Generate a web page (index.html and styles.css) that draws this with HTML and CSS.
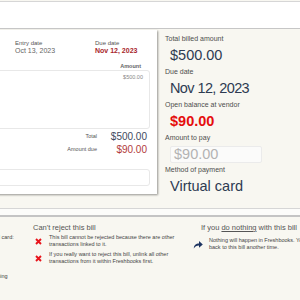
FILE: index.html
```html
<!DOCTYPE html>
<html>
<head>
  <title>Bill review</title>
  <link rel="stylesheet" href="styles.css">
</head>
<body>
  <div class="topbar"></div>

  <div class="main">
    <div class="bill-card">
      <div class="dates">
        <div>
          <div class="small-label">Entry date</div>
          <div class="date">Oct 13, 2023</div>
        </div>
        <div>
          <div class="small-label">Due date</div>
          <div class="date due">Nov 12, 2023</div>
        </div>
      </div>
      <div class="amount-head">Amount</div>
      <div class="lines-box">
        <div class="line-amt">$500.00</div>
      </div>
      <div class="totals">
        <span class="t-label">Total</span><span class="t-value">$500.00</span>
        <span class="t-label">Amount due</span><span class="t-value due">$90.00</span>
      </div>
      <div class="notes-box"></div>
    </div>

    <div class="summary">
      <div class="field">
        <div class="field-label">Total billed amount</div>
        <div class="field-value">$500.00</div>
      </div>
      <div class="field">
        <div class="field-label">Due date</div>
        <div class="field-value tight">Nov 12, 2023</div>
      </div>
      <div class="field">
        <div class="field-label">Open balance at vendor</div>
        <div class="field-value open">$90.00</div>
      </div>
      <div class="field">
        <div class="field-label">Amount to pay</div>
        <div class="pay-input">$90.00</div>
      </div>
      <div class="field">
        <div class="field-label">Method of payment</div>
        <div class="field-value">Virtual card</div>
      </div>
    </div>
  </div>

  <div class="divider"></div>

  <div class="outcomes">
    <div class="outcome first">
      <p class="note">Pay by virtual card:</p>
      <p class="note later">If you do nothing</p>
    </div>

    <div class="outcome reject">
      <h3>Can't reject this bill</h3>
      <div class="item">
        <svg class="x-icon" viewBox="0 0 7 7"><path d="M1 1 L6 6 M6 1 L1 6"/></svg>
        <p class="note">This bill cannot be rejected because there are other<br>transactions linked to it.</p>
      </div>
      <div class="item">
        <svg class="x-icon" viewBox="0 0 7 7"><path d="M1 1 L6 6 M6 1 L1 6"/></svg>
        <p class="note">If you really want to reject this bill, unlink all other<br>transactions from it within Freshbooks first.</p>
      </div>
    </div>

    <div class="outcome nothing">
      <h3>If you <u>do nothing</u> with this bill</h3>
      <div class="item">
        <svg class="arrow-icon" viewBox="0 0 10 9"><path d="M0.8 8.6 C0.8 5 3 3.4 6 3.4 L6 1 L9.8 4.4 L6 7.8 L6 5.4 C3.6 5.4 1.9 6.4 0.8 8.6 Z"/></svg>
        <p class="note">Nothing will happen in Freshbooks. You can come<br>back to this bill another time.</p>
      </div>
    </div>
  </div>
</body>
</html>
```

FILE: styles.css
```css
body {
  margin: 0;
  font-family: "Liberation Sans", Arial, sans-serif;
  background: #f8f7f1;
  overflow: hidden;
}

.topbar {
  margin-top: 1px;
  height: 26px;
  background: #fff;
  border-top: 1px solid #d6d6d6;
  border-bottom: 1px solid #c6c6c6;
}

.main {
  display: flex;
  align-items: flex-start;
  gap: 8px;
}

/* bill card on the left */
.bill-card {
  margin: 1px 0 0 -12px;
  width: 162px;
  padding: 9px 7px 8px 0;
  background: #fff;
  box-shadow: 1px 1px 2px rgba(0, 0, 0, 0.4);
}

.dates {
  display: grid;
  grid-template-columns: 80px auto;
  padding-left: 27px;
}

.small-label {
  font-size: 6px;
  line-height: 8px;
  color: #555;
}

.date {
  font-size: 7px;
  line-height: 8px;
  color: #666;
}

.date.due {
  color: #a8262b;
  font-weight: bold;
}

.amount-head {
  margin-top: 7px;
  padding-right: 9px;
  text-align: right;
  font-size: 5.5px;
  line-height: 8px;
  font-weight: bold;
  color: #666;
}

.lines-box {
  height: 54px;
  border: 1px solid #e8e8e8;
  border-radius: 3px;
  padding: 3px 6px 0 0;
}

.line-amt {
  text-align: right;
  font-size: 5.5px;
  line-height: 7px;
  color: #888;
}

.totals {
  margin-top: 1px;
  display: grid;
  grid-template-columns: 1fr 50px;
  padding-right: 3px;
  text-align: right;
}

.t-label {
  font-size: 5.5px;
  line-height: 13px;
  color: #555;
}

.t-value {
  font-size: 10px;
  line-height: 13px;
  color: #3e4a5e;
}

.t-value.due {
  color: #b23b3b;
}

.notes-box {
  margin-top: 13px;
  height: 15px;
  border: 1px solid #e8e8e8;
  border-radius: 3px;
}

/* summary on the right */
.summary {
  padding-top: 5px;
}

.field {
  margin-bottom: 2px;
}

.field-label {
  font-size: 7px;
  line-height: 10px;
  color: #4d4d4d;
}

.field-value {
  margin-top: 1px;
  padding-left: 5px;
  font-size: 14.5px;
  line-height: 20px;
  color: #2e3b52;
}

.field-value.tight {
  letter-spacing: -0.6px;
}

.field-value.open {
  color: #e50d0d;
  font-weight: bold;
}

.pay-input {
  margin: 3px 0 1px 5px;
  width: 87px;
  height: 15px;
  padding-left: 3px;
  background: #fbfbfa;
  border: 1px solid #ebebeb;
  border-radius: 2px;
  font-size: 14.5px;
  line-height: 15px;
  color: #b3b3b3;
}

.divider {
  margin-top: 10px;
  height: 6px;
  background: #fcfcfa;
  border-top: 1px solid #d6d6d6;
  border-bottom: 2px solid #c4c4c4;
}

/* what happens next */
.outcomes {
  display: flex;
  padding-top: 6px;
}

.outcome h3 {
  margin: 0;
  font-size: 7.5px;
  line-height: 10px;
  font-weight: normal;
  color: #555;
}

.note {
  margin: 0;
  font-size: 5.5px;
  line-height: 7px;
  color: #444;
}

.first {
  margin-left: -33px;
  width: 60px;
  flex: none;
  padding-top: 11px;
}

.first .later {
  margin-top: 32px;
}

.reject {
  margin-left: 6px;
  width: 155px;
  flex: none;
}

.nothing {
  margin-left: 5px;
  flex: none;
}

.nothing h3 {
  padding-left: 8px;
}

.item {
  display: flex;
  align-items: center;
  gap: 7px;
  margin-top: 1px;
}

.reject .item + .item {
  margin-top: 3px;
}

.nothing .item {
  margin-top: 4px;
  gap: 6px;
}

.x-icon {
  margin-left: 2px;
  width: 7px;
  height: 7px;
  flex: none;
}

.x-icon path {
  stroke: #e8141b;
  stroke-width: 1.9;
  fill: none;
}

.arrow-icon {
  width: 10px;
  height: 9px;
  flex: none;
}

.arrow-icon path {
  fill: #1d3461;
}
```
